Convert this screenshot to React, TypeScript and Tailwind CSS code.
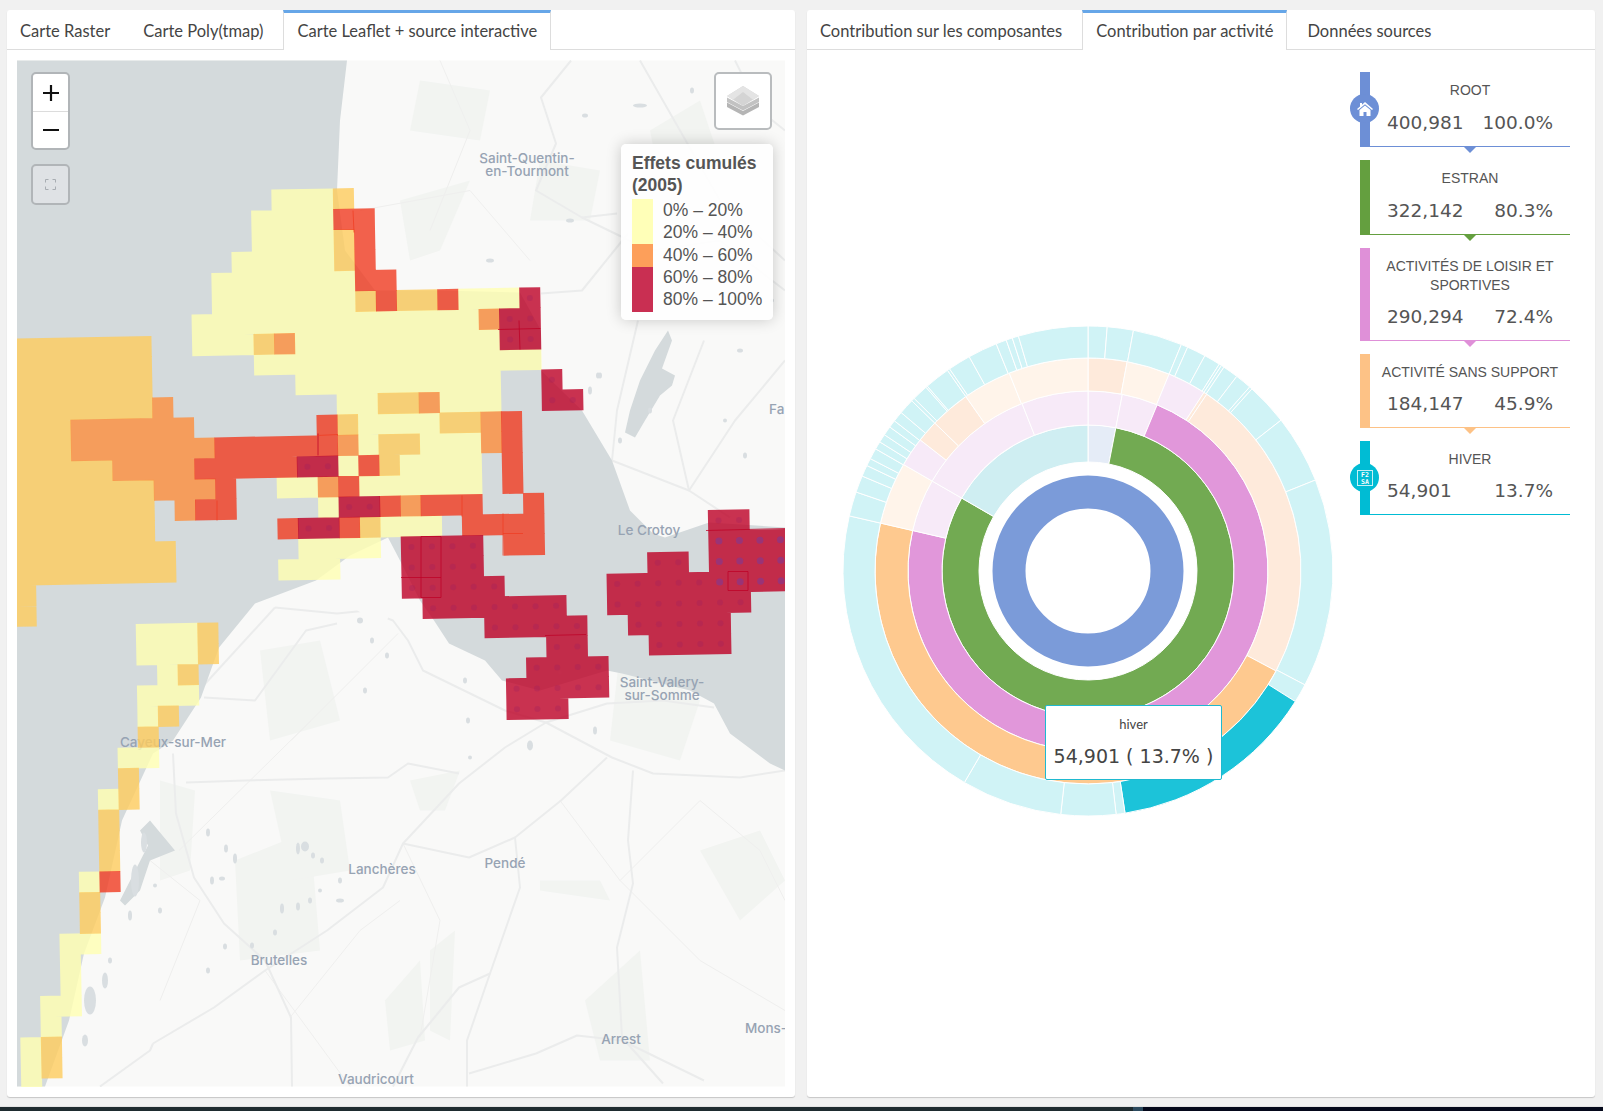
/**
 * Effets cumulés dashboard: Leaflet-like map on the left, sunburst on the right
 */

import React from 'react';

// ============================================================================
// MAP DATA
// ============================================================================

const COLORS: Record<string, string> = {
  Y: '#FFFFB2',
  A: '#FECC5C',
  O: '#FD8D3C',
  R: '#F03B20',
  D: '#BD0026',
};

// [row, first column, column after the last, colour]
const CELLS: [number, number, number, string][] = [
  [0, 4, 7, 'Y'], [0, 7, 8, 'A'],
  [1, 3, 7, 'Y'], [1, 7, 9, 'R'],
  [2, 3, 7, 'Y'], [2, 7, 8, 'A'], [2, 8, 9, 'R'],
  [3, 2, 7, 'Y'], [3, 7, 8, 'A'], [3, 8, 9, 'R'],
  [4, 1, 8, 'Y'], [4, 8, 10, 'R'],
  [5, 1, 8, 'Y'], [5, 8, 9, 'A'], [5, 9, 10, 'R'], [5, 10, 12, 'A'], [5, 12, 13, 'R'], [5, 13, 16, 'Y'], [5, 16, 17, 'D'],
  [6, 0, 14, 'Y'], [6, 14, 15, 'O'], [6, 15, 17, 'D'],
  [7, 0, 3, 'Y'], [7, 3, 4, 'A'], [7, 4, 5, 'O'], [7, 5, 15, 'Y'], [7, 15, 17, 'D'],
  [8, 3, 17, 'Y'],
  [9, 5, 15, 'Y'], [9, 17, 18, 'D'],
  [10, 7, 9, 'Y'], [10, 9, 11, 'A'], [10, 11, 12, 'O'], [10, 12, 15, 'Y'], [10, 17, 19, 'D'], [10, -2, -1, 'O'],
  [11, -6, 0, 'O'], [11, 6, 7, 'R'], [11, 7, 8, 'A'], [11, 8, 12, 'Y'], [11, 12, 14, 'A'], [11, 14, 15, 'O'], [11, 15, 16, 'R'],
  [12, -6, 1, 'O'], [12, 1, 7, 'R'], [12, 7, 8, 'O'], [12, 8, 9, 'Y'], [12, 9, 11, 'A'], [12, 11, 14, 'Y'], [12, 14, 15, 'O'], [12, 15, 16, 'R'],
  [13, -4, 0, 'O'], [13, 0, 5, 'R'], [13, 5, 7, 'D'], [13, 7, 8, 'Y'], [13, 8, 9, 'R'], [13, 9, 10, 'A'], [13, 10, 14, 'Y'], [13, 15, 16, 'R'],
  [14, -2, 1, 'O'], [14, 1, 2, 'R'], [14, 4, 6, 'Y'], [14, 6, 7, 'O'], [14, 7, 8, 'R'], [14, 8, 14, 'Y'], [14, 15, 16, 'R'],
  [15, -1, 0, 'O'], [15, 0, 2, 'R'], [15, 6, 7, 'Y'], [15, 7, 9, 'D'], [15, 9, 10, 'R'], [15, 10, 11, 'O'], [15, 11, 14, 'R'], [15, 16, 17, 'R'],
  [16, 4, 5, 'R'], [16, 5, 7, 'D'], [16, 7, 8, 'R'], [16, 8, 9, 'A'], [16, 9, 12, 'Y'], [16, 13, 17, 'R'], [16, 25, 27, 'D'],
  [17, 5, 9, 'Y'], [17, 10, 14, 'D'], [17, 15, 17, 'R'], [17, 25, 30, 'D'],
  [18, 4, 7, 'Y'], [18, 10, 14, 'D'], [18, 22, 24, 'D'], [18, 25, 30, 'D'],
  [19, 10, 15, 'D'], [19, 20, 30, 'D'],
  [20, 11, 18, 'D'], [20, 20, 27, 'D'],
  [21, 14, 19, 'D'], [21, 21, 26, 'D'], [21, -3, 0, 'Y'], [21, 0, 1, 'A'],
  [22, 17, 19, 'D'], [22, 22, 26, 'D'], [22, -3, 0, 'Y'], [22, 0, 1, 'A'],
  [23, 16, 20, 'D'], [23, -2, -1, 'Y'], [23, -1, 0, 'A'],
  [24, 15, 20, 'D'], [24, -3, 0, 'Y'],
  [25, 15, 18, 'D'], [25, -3, -2, 'Y'], [25, -2, -1, 'A'],
  [26, -3, -2, 'A'],
  [27, -4, -2, 'Y'],
  [28, -4, -3, 'A'],
  [29, -5, -4, 'Y'], [29, -4, -3, 'A'],
  [30, -5, -4, 'A'], [31, -5, -4, 'A'], [32, -5, -4, 'A'],
  [33, -6, -5, 'Y'], [33, -5, -4, 'R'],
  [34, -6, -5, 'A'], [35, -6, -5, 'A'],
  [36, -7, -5, 'Y'], [37, -7, -6, 'Y'], [38, -7, -6, 'Y'],
  [39, -8, -6, 'Y'], [40, -8, -7, 'Y'],
  [41, -9, -8, 'Y'], [41, -8, -7, 'A'],
  [42, -9, -8, 'Y'], [42, -8, -7, 'A'],
  [43, -9, -8, 'Y'], [44, -9, -8, 'Y'],
  // big block on the west side
  [7, -10, -2, 'A'], [8, -10, -2, 'A'], [9, -10, -2, 'A'], [10, -10, -2, 'A'],
  [11, -10, -6, 'A'], [11, -6, -2, 'O'],
  [12, -10, -6, 'A'],
  [13, -10, -4, 'A'], [14, -10, -2, 'A'], [15, -10, -2, 'A'], [16, -10, -2, 'A'],
  [17, -10, -1, 'A'], [18, -10, -1, 'A'],
  [19, -10, -7.85, 'A'], [20, -10, -7.85, 'A'],
];

function gridPoint(i: number, j: number): [number, number] {
  return [191.8 + 20.5 * i + 0.38 * (j - 6), 189 + 20.55 * j - 0.4 * (i - 5)];
}

function cellPath(row: number, from: number, to: number): string {
  const e = 0.25;
  const p = [
    gridPoint(from - e / 20, row - e / 20),
    gridPoint(to + e / 20, row - e / 20),
    gridPoint(to + e / 20, row + 1 + e / 20),
    gridPoint(from - e / 20, row + 1 + e / 20),
  ];
  return 'M' + p.map((c) => c[0].toFixed(1) + ' ' + c[1].toFixed(1)).join('L') + 'Z';
}

const ROADS: string[] = [
  'M153 1043L214 1007L265 970L327 930L383 887L403 843L459 783L505 747L546 722L607 703L663 700L714 707',
  'M546 722L612 757L653 773L740 777L785 770',
  'M186 782L245 780L327 778L388 777L408 763L459 773',
  'M173 753L176 813L194 877L224 923L265 960L291 1017L292 1086',
  'M607 757L561 800L515 837L520 887L490 973L467 1040L467 1086',
  'M633 770L628 840L633 883L617 947L622 1037L663 1083',
  'M393 1086L418 1037L459 987L490 973',
  'M469 1073L536 1053L577 1035L622 1040L704 1080',
  'M275 607L337 613L367 610L393 620L408 640L423 670L505 710L546 722',
  'M199 690L275 607',
  'M204 697L255 700L306 630L337 623',
  'M403 843L469 857L515 837',
  'M571 60L541 97L556 143L536 190L582 217L617 213',
  'M628 233L582 290L541 293',
  'M612 460L689 490L735 420L785 360',
  'M689 490L730 517',
  'M612 460L617 410L638 320',
  'M704 340L673 420L689 490',
  'M100 1086L150 1050L153 1043',
  'M735 60L760 110L785 130',
  'M640 60L680 130L720 200L785 260',
  'M582 217L650 250L720 240L785 290',
];

const THIN_ROADS: string[] = [
  'M179 850L311 720',
  'M291 740L398 633',
  'M265 970L350 1086',
  'M403 843L440 920L420 1037',
  'M560 800L620 880L700 960L785 1010',
  'M290 1017L360 930L400 900',
  'M160 1000L200 900L150 860',
  'M700 800L760 850L785 900',
  'M620 880L700 800',
  'M440 60L470 130L430 230',
  'M360 210L470 190L530 260',
];

const GREEN: string[] = [
  'M235 860L310 830L320 950L240 960Z',
  'M270 790L340 800L350 870L290 880Z',
  'M385 1000L420 960L425 1040L390 1050Z',
  'M430 950L455 930L450 1040L430 1030Z',
  'M540 880L600 880L610 900L540 890Z',
  'M700 850L760 830L785 880L740 920Z',
  'M585 1000L640 950L650 1060L600 1060Z',
  'M160 780L195 790L190 870L160 880Z',
  'M410 780L460 770L445 810L420 810Z',
  'M540 160L600 170L590 220L530 220Z',
  'M400 200L470 180L440 250L410 260Z',
  'M420 80L490 90L480 140L410 130Z',
  'M620 650L700 700L680 760L610 740Z',
  'M260 650L320 640L340 720L270 740Z',
  'M650 130L700 100L720 160L660 180Z',
];

const PONDS: [number, number, number, number][] = [
  [208, 832, 2, 4], [226, 848, 2, 4], [235, 858, 2, 5], [212, 880, 2, 4], [222, 878, 3, 2],
  [298, 848, 2, 6], [305, 846, 4, 5], [313, 855, 2, 3], [322, 860, 2, 3], [310, 900, 2, 3],
  [282, 908, 2, 5], [298, 906, 2, 4], [320, 890, 2, 2], [340, 880, 2, 3], [340, 900, 4, 2],
  [252, 945, 2, 3], [275, 932, 2, 3], [225, 946, 2, 3], [208, 970, 2, 3], [160, 910, 2, 3],
  [144, 842, 3, 10], [135, 880, 4, 16], [155, 885, 2, 2], [130, 915, 2, 5], [90, 1000, 6, 14],
  [105, 980, 3, 8], [85, 1040, 3, 6], [110, 960, 2, 3], [590, 390, 2, 4], [598, 375, 2, 3],
  [620, 440, 2, 3], [650, 410, 2, 3], [725, 420, 2, 2], [745, 455, 2, 3], [600, 375, 2, 3],
  [570, 220, 4, 2], [585, 115, 3, 2], [640, 105, 7, 2], [692, 90, 2, 3], [490, 260, 4, 2],
  [360, 620, 3, 3], [372, 640, 2, 3], [387, 655, 2, 3], [465, 680, 2, 3], [468, 720, 2, 3],
  [560, 672, 2, 2], [365, 690, 2, 3], [595, 730, 2, 4], [470, 757, 2, 2], [530, 745, 3, 5],
  [772, 300, 2, 2], [740, 350, 3, 2],
];

const LABELS: [string, number, number, string?][] = [
  ['Saint-Quentin-', 527, 162],
  ['en-Tourmont', 527, 175],
  ['Le Crotoy', 649, 534],
  ['Saint-Valery-', 662, 686],
  ['sur-Somme', 662, 699],
  ['Fa', 769, 413, 'start'],
  ['Cayeux-sur-Mer', 173, 746],
  ['Lanchères', 382, 873],
  ['Pendé', 505, 867],
  ['Brutelles', 279, 964],
  ['Arrest', 621, 1043],
  ['Mons-', 745, 1032, 'start'],
  ['Vaudricourt', 376, 1083],
];

const LEGEND: string[] = ['0% – 20%', '20% – 40%', '40% – 60%', '60% – 80%', '80% – 100%'];

// ============================================================================
// MAP PANEL
// ============================================================================

const MapDrawing: React.FC = () => {
  const paths: Record<string, string> = { Y: '', A: '', O: '', R: '', D: '' };
  CELLS.forEach(([row, from, to, c]) => {
    paths[c] += cellPath(row, from, to);
  });

  const dots: [number, number, boolean][] = [];
  CELLS.forEach(([row, from, to, c]) => {
    if (c !== 'D') return;
    for (let i = from; i < to; i++) {
      const [x, y] = gridPoint(i + 0.5, row + 0.5);
      dots.push([x, y, i >= 25 && row >= 17 && row <= 19]);
    }
  });

  return (
    <svg viewBox="17 60 768 1026" className="block w-full h-full">
      <rect x="17" y="60" width="768" height="1026" fill="#f9f9f8" />
      {GREEN.map((d, i) => (
        <path key={i} d={d} fill="#f2f4f1" />
      ))}
      <g fill="none" stroke="#efefee" strokeWidth="1">
        {THIN_ROADS.map((d, i) => (
          <path key={i} d={d} />
        ))}
      </g>
      <g fill="none" stroke="#ebecec" strokeWidth="2" strokeLinejoin="round">
        {ROADS.map((d, i) => (
          <path key={i} d={d} />
        ))}
      </g>
      {/* sea and the bay */}
      <path
        d="M17 60L347 60L340 120L337 190L345 250L375 290L440 290L520 292L541 330L541 370L582 410L600 440L612 460L630 510L653 533L665 537L709 522L785 527L785 770L770 763L730 733L714 703L690 690L622 673L607 670L540 690L502 680L485 660L449 643L434 620L420 600L400 560L388 537L350 555L316 580L255 603L219 647L201 697L173 740L153 753L122 820L105 897L84 953L69 1020L45 1086L17 1086Z"
        fill="#d4dadc"
      />
      <path d="M668 330L655 350L640 380L630 410L625 432L635 437L645 420L660 395L672 385L675 375L662 368L672 340Z" fill="#d4dadc" />
      <path d="M120 900L148 845L140 830L150 820L175 850L150 860L140 890L125 905Z" fill="#d4dadc" />
      <path d="M340 590L360 570L375 585L395 600L385 625L365 615L350 605Z" fill="#f9f9f8" />
      {PONDS.map(([x, y, rx, ry], i) => (
        <ellipse key={i} cx={x} cy={y} rx={rx} ry={ry} fill="#d9dee1" />
      ))}
      {LABELS.map(([t, x, y, anchor]) => (
        <text
          key={t}
          x={x}
          y={y}
          textAnchor={(anchor as 'start') || 'middle'}
          fontSize="13.5"
          fontWeight="500"
          fontFamily="Inter, Lato, sans-serif"
          fill="#97a3b3"
        >
          {t}
        </text>
      ))}
      {/* choropleth grid */}
      {Object.keys(paths).map((c) => (
        <path key={c} d={paths[c]} fill={COLORS[c]} fillOpacity="0.8" />
      ))}
      {dots.map(([x, y, strong], i) => (
        <circle key={i} cx={x} cy={y} r={strong ? 3.5 : 3} fill={strong ? '#7a3a9a' : '#a02060'} fillOpacity={strong ? 0.55 : 0.3} />
      ))}
      <g fill="none" stroke="#bd0026" strokeOpacity="0.75" strokeWidth="1">
        <path d="M421 536L441 536L441 597L421 597Z" />
        <path d="M401 577L441 577" />
        <path d="M728 571L748 571L748 590L728 590Z" />
        <path d="M706 530L785 528" />
        <path d="M545 635L586 634" />
        <path d="M519 320L520 349" />
        <path d="M498 329L540 328" />
        <path d="M318 433L318 455" />
      </g>
      <g fill="none" stroke="#f03b20" strokeOpacity="0.7" strokeWidth="1">
        <path d="M317 435L338 434" />
        <path d="M217 500L217 520" />
        <path d="M462 495L462 516" />
        <path d="M503 513L503 555" />
        <path d="M503 533L523 533" />
        <path d="M353 210L354 232" />
      </g>
    </svg>
  );
};

const LayersIcon: React.FC = () => (
  <svg width="34" height="34" viewBox="0 0 34 34">
    <path d="M17 21L33 12.5V17L17 25.5L1 17V12.5Z" fill="#b5b5b5" transform="translate(0 6)" />
    <path d="M17 21L33 12.5V17L17 25.5L1 17V12.5Z" fill="#c2c2c2" transform="translate(0 1)" />
    <path d="M17 2L33 12L17 22L1 12Z" fill="#d4d4d4" />
    <path d="M17 2L33 12L27 15.8L17 8L7 15.8L1 12Z" fill="#e4e4e4" />
  </svg>
);

const MapPanel: React.FC = () => (
  <div className="relative w-full h-full overflow-hidden">
    <MapDrawing />

    {/* Zoom and fullscreen */}
    <div className="absolute left-[14px] top-[12px] w-[39px] flex flex-col gap-[14px]">
      <div className="h-[78px] rounded-[5px] border-2 border-[#b1b5b8] bg-white flex flex-col overflow-hidden">
        <div className="h-[38px] flex items-center justify-center border-b border-[#dcdcdc]">
          <svg width="16" height="16" viewBox="0 0 16 16">
            <path d="M8 0V16M0 8H16" stroke="#111" strokeWidth="2.2" />
          </svg>
        </div>
        <div className="flex-1 flex items-center justify-center">
          <svg width="16" height="16" viewBox="0 0 16 16">
            <path d="M0 8H16" stroke="#111" strokeWidth="2.2" />
          </svg>
        </div>
      </div>
      <div className="h-[41px] rounded-[5px] border-2 border-[#b1b5b8] bg-[#dfe2e5] flex items-center justify-center">
        <svg width="11" height="11" viewBox="0 0 11 11" fill="none" stroke="#a8adb2" strokeWidth="1">
          <path d="M.5 3.5V.5H3.5M7.5 .5H10.5V3.5M10.5 7.5V10.5H7.5M3.5 10.5H.5V7.5" />
        </svg>
      </div>
    </div>

    {/* Layers control */}
    <div className="absolute right-[13px] top-[12px] w-[58px] h-[58px] rounded-[5px] border-2 border-[#b9bcbe] bg-white flex items-center justify-center">
      <LayersIcon />
    </div>

    {/* Legend */}
    <div className="absolute right-[12px] top-[84px] w-[152px] h-[176px] rounded-[5px] bg-white/90 shadow-[0_0_15px_rgba(0,0,0,0.2)] pl-[11px] pt-[8px] font-['Liberation_Sans',sans-serif] text-[#555]">
      <div className="text-[17.5px] leading-[22px] font-bold">
        Effets cumulés
        <br />
        (2005)
      </div>
      <div className="flex mt-[3px]">
        <div className="w-[21px] flex flex-col">
          <div className="h-[45px] bg-[#ffffb8]" />
          <div className="h-[23px] bg-[#fd9f5a]" />
          <div className="h-[45px] bg-[#c92f52]" />
        </div>
        <div className="ml-[10px] text-[17.5px] leading-[22.3px] whitespace-nowrap">
          {LEGEND.map((l) => (
            <div key={l}>{l}</div>
          ))}
        </div>
      </div>
    </div>
  </div>
);

// ============================================================================
// SUNBURST
// ============================================================================

const PF = '#f7eaf8';
const PE = '#feeadb';
const LI = '#fff4ea';
const ICE = '#d0f3f6';

const RINGS: { r0: number; r1: number; arcs: [number, number, string][] }[] = [
  {
    r0: 109,
    r1: 146,
    arcs: [[0, 11, '#e5ecf7'], [11, 300, '#72aa52'], [300, 360, '#cfeef2']],
  },
  {
    r0: 146,
    r1: 180,
    arcs: [[0, 11, PF], [11, 22.6, PF], [22.6, 283, '#e197da'], [283, 300, PF], [300, 338.5, PF], [338.5, 360, PF]],
  },
  {
    r0: 180,
    r1: 213,
    arcs: [
      [0, 10.6, PE], [10.6, 22.4, LI], [22.4, 33, PF], [33, 33.9, PE], [33.9, 118, PE], [118, 283, '#fec98f'],
      [283, 300, LI], [300, 308, PF], [308, 314, PE], [314, 325, PE], [325, 338.3, LI], [338.3, 360, LI],
    ],
  },
];

// separators of the outer ring, in degrees from the top, clockwise
const OUTER: number[] = [
  0, 4.5, 10.7, 22.4, 24, 28.5, 32.4, 33, 33.7, 37.4, 41.3, 42, 52, 68.2, 117.7, 122.2, 171.3, 173.4, 186.4, 210.3,
  283, 288.8, 292.8, 295.5, 297.3, 299.9, 301.8, 303.8, 306, 307.8, 310.3, 314, 314.8, 318.6, 319, 325, 325.6, 331,
  338, 340.5, 342, 343.5, 360,
];

function arcPath(r0: number, r1: number, a0: number, a1: number): string {
  const toXY = (r: number, a: number) => {
    const t = (a * Math.PI) / 180;
    return (250 + r * Math.sin(t)).toFixed(2) + ' ' + (250 - r * Math.cos(t)).toFixed(2);
  };
  const large = a1 - a0 > 180 ? 1 : 0;
  return (
    `M${toXY(r0, a0)}L${toXY(r1, a0)}A${r1} ${r1} 0 ${large} 1 ${toXY(r1, a1)}` +
    `L${toXY(r0, a1)}A${r0} ${r0} 0 ${large} 0 ${toXY(r0, a0)}Z`
  );
}

const Sunburst: React.FC = () => (
  <svg width="500" height="500" viewBox="0 0 500 500" className="block">
    <circle cx="250" cy="250" r="79" fill="none" stroke="#7b9bd9" strokeWidth="33" />
    {RINGS.map((ring, k) =>
      ring.arcs.map(([a0, a1, c], i) => (
        <path key={`${k}-${i}`} d={arcPath(ring.r0, ring.r1, a0, a1)} fill={c} stroke="#fff" strokeWidth="1" />
      )),
    )}
    {OUTER.slice(0, -1).map((a0, i) => (
      <path
        key={a0}
        d={arcPath(213, 245, a0, OUTER[i + 1])}
        fill={a0 === 122.2 ? '#1cc3d9' : ICE}
        stroke="#fff"
        strokeWidth="1"
      />
    ))}
  </svg>
);

// ============================================================================
// BREADCRUMB ON THE RIGHT
// ============================================================================

const HomeIcon: React.FC = () => (
  <svg width="16" height="14" viewBox="0 0 16 14" fill="#fff">
    <path d="M8 0L16 7L15 8L8 2.2L1 8L0 7L3 4.4V1H5V2.7Z" />
    <path d="M2.5 8L8 3.6L13.5 8V14H9.5V10H6.5V14H2.5Z" />
  </svg>
);

const SeasonIcon: React.FC = () => (
  <svg width="16" height="16" viewBox="0 0 16 16">
    <rect x="0.5" y="0.5" width="15" height="15" fill="none" stroke="#c6f0f5" strokeWidth="1" />
    <text x="8" y="7" textAnchor="middle" fontSize="6.5" fontWeight="700" fontFamily="DejaVu Sans Mono, monospace" fill="#fff">
      F2
    </text>
    <text x="8" y="14" textAnchor="middle" fontSize="6.5" fontWeight="700" fontFamily="DejaVu Sans Mono, monospace" fill="#fff">
      SA
    </text>
  </svg>
);

const STEPS = [
  { label: 'ROOT', value: '400,981', pct: '100.0%', color: '#6d8fd6', h: 'h-[75px]', arrow: true, icon: <HomeIcon /> },
  { label: 'ESTRAN', value: '322,142', pct: '80.3%', color: '#649f3f', h: 'h-[75px]', arrow: true },
  { label: 'ACTIVITÉS DE LOISIR ET SPORTIVES', value: '290,294', pct: '72.4%', color: '#df90d8', h: 'h-[93px]', arrow: true },
  { label: 'ACTIVITÉ SANS SUPPORT', value: '184,147', pct: '45.9%', color: '#fdc286', h: 'h-[74px]', arrow: true },
  { label: 'HIVER', value: '54,901', pct: '13.7%', color: '#00bcd4', h: 'h-[74px]', arrow: false, icon: <SeasonIcon /> },
];

const Breadcrumb: React.FC = () => (
  <div className="w-[210px] flex flex-col gap-[13px]">
    {STEPS.map((s) => (
      <div key={s.label} className={`relative flex ${s.h}`}>
        <div className="w-[10px]" style={{ backgroundColor: s.color }} />
        <div className="flex-1 flex flex-col border-b-[1.5px] pl-[17px] pr-[17px] pt-[9px]" style={{ borderColor: s.color }}>
          <div className="text-center text-[14px] leading-[19px] text-[#555] font-['Liberation_Sans',sans-serif] -mx-[8px]">
            {s.label}
          </div>
          <div className="mt-auto mb-[11px] flex justify-between text-[18.5px] leading-[24px] text-[#555] font-['DejaVu_Sans',sans-serif]">
            <span>{s.value}</span>
            <span>{s.pct}</span>
          </div>
        </div>
        {s.icon && (
          <div
            className="absolute left-[-10px] top-[22px] w-[29px] h-[29px] rounded-full flex items-center justify-center"
            style={{ backgroundColor: s.color }}
          >
            {s.icon}
          </div>
        )}
        {s.arrow && (
          <div
            className="absolute left-[104px] bottom-[-6px] w-0 h-0 border-x-[6px] border-x-transparent border-t-[6px]"
            style={{ borderTopColor: s.color }}
          />
        )}
      </div>
    ))}
  </div>
);

// ============================================================================
// TABS AND PAGE
// ============================================================================

const Tabs: React.FC<{ items: string[]; active: number }> = ({ items, active }) => (
  <div className="flex h-[40px] shrink-0 border-b border-[#ddd] font-['Lato',sans-serif] text-[16.5px] text-[#444]">
    {items.map((t, i) =>
      i === active ? (
        <div
          key={t}
          className="h-[40px] px-[13px] pt-[5px] mr-[7px] border-t-[3px] border-x border-t-[#66a6e8] border-x-[#ddd] bg-white leading-[26px] whitespace-nowrap"
        >
          {t}
        </div>
      ) : (
        <div key={t} className="h-[39px] px-[13px] pt-[8px] mr-[7px] leading-[26px] whitespace-nowrap">
          {t}
        </div>
      ),
    )}
  </div>
);

const App: React.FC = () => (
  <div className="w-[1603px] h-[1111px] overflow-hidden flex flex-col bg-[#f1f1f1]">
    <div className="flex-1 min-h-0 flex gap-[12px] pl-[7px] pr-[8px] pt-[10px] pb-[9px]">
      {/* Left panel */}
      <div className="w-[788px] flex flex-col bg-white rounded-[3px] shadow-[0_1px_1px_rgba(0,0,0,0.18)]">
        <Tabs items={['Carte Raster', 'Carte Poly(tmap)', 'Carte Leaflet + source interactive']} active={2} />
        <div className="flex-1 min-h-0 px-[10px] pt-[10px] pb-[10px]">
          <MapPanel />
        </div>
      </div>

      {/* Right panel */}
      <div className="flex-1 relative flex flex-col bg-white rounded-[3px] shadow-[0_1px_1px_rgba(0,0,0,0.18)]">
        <Tabs items={['Contribution sur les composantes', 'Contribution par activité', 'Données sources']} active={1} />
        <div className="flex-1 min-h-0 flex">
          <div className="ml-[31px] mt-[271px]">
            <Sunburst />
          </div>
          <div className="ml-auto mr-[25px] mt-[22px]">
            <Breadcrumb />
          </div>
        </div>

        {/* Tooltip over the chart */}
        <div className="absolute left-[238px] top-[695px] w-[177px] h-[75px] rounded-[2px] border border-[#1fb9d0] bg-white flex flex-col items-center">
          <div className="mt-[9px] text-[13px] leading-[18px] text-[#444] font-['Lato',sans-serif]">hiver</div>
          <div className="mt-[10px] text-[19px] leading-[26px] text-[#444] font-['DejaVu_Sans',sans-serif] whitespace-nowrap">
            54,901 ( 13.7% )
          </div>
        </div>
      </div>
    </div>

    {/* Desktop strip at the bottom of the window */}
    <div className="h-[5px] shrink-0 flex border-t border-[#e3e3e3]">
      <div className="w-[1133px] bg-[#1e2b2f]" />
      <div className="w-[10px] bg-[#2c4a5e]" />
      <div className="flex-1 bg-[#04081a]" />
    </div>
  </div>
);

export default App;
